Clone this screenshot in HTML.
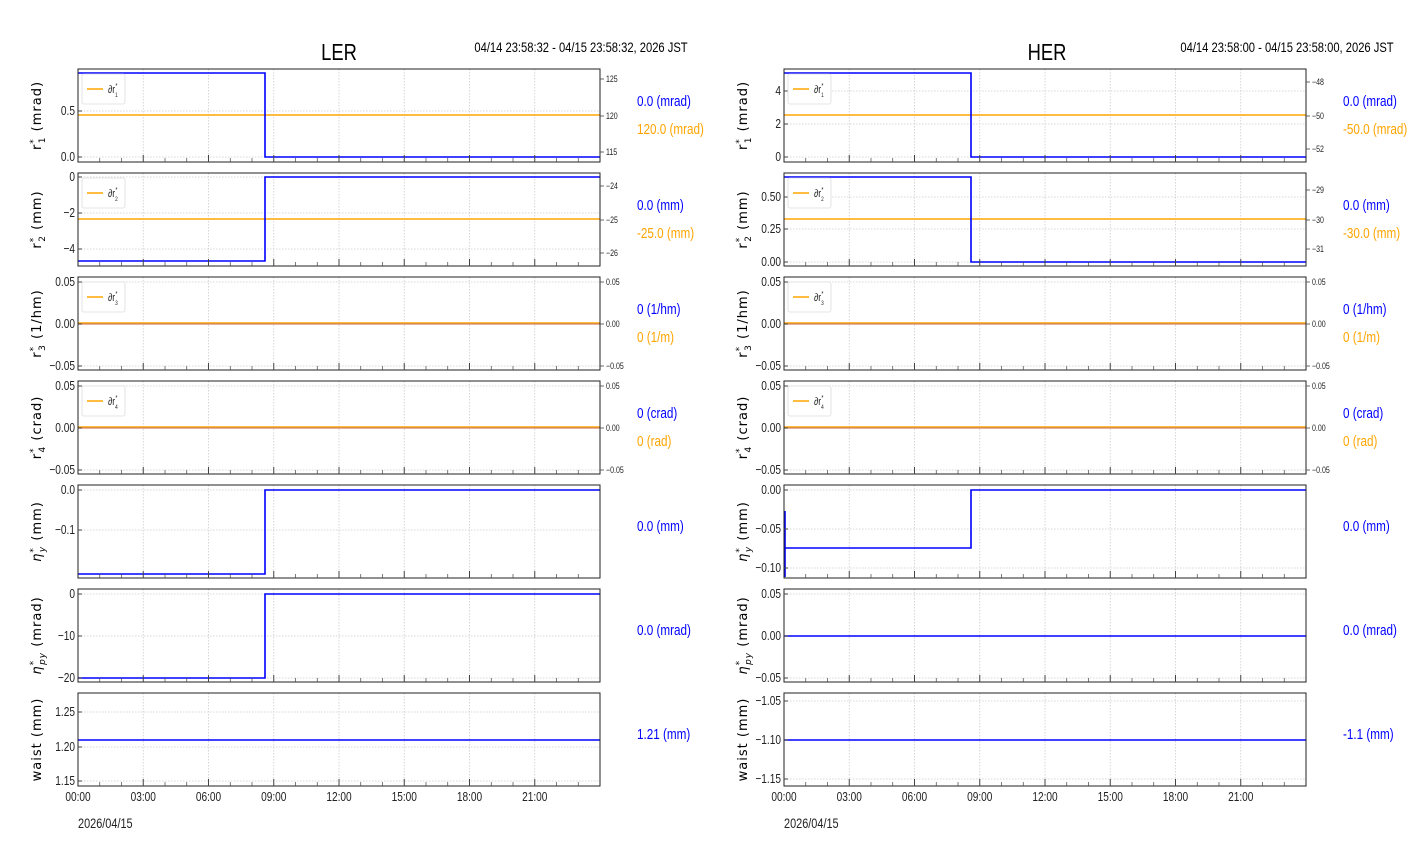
<!DOCTYPE html>
<html><head><meta charset="utf-8"><style>
html,body{margin:0;padding:0;background:#fff;width:1412px;height:864px;overflow:hidden}
svg text{font-family:"Liberation Sans",sans-serif}
.lab{font-family:"DejaVu Sans","Liberation Sans",sans-serif !important}
</style></head><body>
<svg id="s" width="1412" height="864" xmlns="http://www.w3.org/2000/svg"></svg>
<script>
var s=document.getElementById('s'),h='';
function L(x1,y1,x2,y2,c,w,extra){h+='<line x1="'+x1+'" y1="'+y1+'" x2="'+x2+'" y2="'+y2+'" stroke="'+c+'" stroke-width="'+w+'" '+(extra||'')+'/>';}
function T(x,y,t,sz,c,anc,sc){sc=sc||0.78;h+='<text x="0" y="0" transform="translate('+x+','+y+') scale('+sc+',1)" font-size="'+sz+'" fill="'+c+'" text-anchor="'+(anc||'start')+'">'+t+'</text>';}
T(339,60,'LER',23,'#000','middle',0.8);
T(581,52,'04/14 23:58:32 - 04/15 23:58:32, 2026 JST',14,'#000','middle',0.8);
T(1047,60,'HER',23,'#000','middle',0.8);
T(1287,52,'04/14 23:58:00 - 04/15 23:58:00, 2026 JST',14,'#000','middle',0.8);
var tops=[69,173,277,381,485,589,693],H=93;
function panel(x0,top,p,last){
 var x1=x0+522;
 for(var i=1;i<8;i++){var gx=x0+i*65.25;L(gx,top,gx,top+H,'#ccc',0.8,'stroke-dasharray="1.5,1.5"');}
 p.yt.forEach(function(t){L(x0,t[1],x1,t[1],'#ccc',0.8,'stroke-dasharray="1.5,1.5"');});
 if(p.o!=null) L(x0,p.o,x1,p.o,'#ffa500',1.5);
 if(p.r) L(x0,p.r,x1,p.r,'#d08060',1.2);
 if(p.b) h+='<polyline points="'+p.b+'" fill="none" stroke="#0000ff" stroke-width="1.6"/>';
 h+='<rect x="'+x0+'" y="'+top+'" width="522" height="'+H+'" fill="none" stroke="#222" stroke-width="1"/>';
 for(var i=1;i<24;i++){var tx=x0+i*21.75;var mj=i%3==0;L(tx,top+H,tx,top+H-(mj?7:4),'#444',mj?1:0.7);}
 p.yt.forEach(function(t){L(x0,t[1],x0+4,t[1],'#444',1);T(x0-3,t[1]+4,t[0],13,'#222','end');});
 if(p.rt){p.rt.forEach(function(t){L(x1,t[1],x1+4,t[1],'#444',0.8);T(x1+6,t[1]+3,t[0],9,'#222');});}
 var cy=top+H/2;
 h+='<text class="lab" x="0" y="0" font-size="13" fill="#000" text-anchor="middle" transform="translate('+(x0-37)+','+cy+') rotate(-90)" letter-spacing="1">'+p.yl+'</text>';
 if(p.lg){h+='<rect x="'+(x0+4)+'" y="'+(top+5)+'" width="43" height="30" rx="2" fill="#fff" stroke="#ddd" stroke-width="0.8"/>';L(x0+9,top+20,x0+25,top+20,'#ffa500',1.5);T(x0+30,top+24,'∂r<tspan font-size="6" dy="4">'+p.lg+'</tspan><tspan font-size="7" dx="-3" dy="-9">*</tspan>',11,'#222');}
 var vx=x1+37;
 if(p.o!=null||p.r){T(vx,top+37,p.v1,15,'#0000ff');T(vx,top+65,p.v2,15,'#ffa500');}
 else T(vx,top+46,p.v1,15,'#0000ff');
 if(last){var lb=['00:00','03:00','06:00','09:00','12:00','15:00','18:00','21:00'];
  lb.forEach(function(t,i){T(x0+i*65.25,top+H+15,t,13,'#222','middle');});
  T(x0,top+H+42,'2026/04/15',14,'#222');}
}
function step(x0,ya,yb,sx){return x0+','+ya+' '+sx+','+ya+' '+sx+','+yb+' '+(x0+522)+','+yb;}
var sup=function(a,b){return 'r<tspan font-size="9" dy="-5">*</tspan><tspan font-size="9" dx="-5" dy="9">'+a+'</tspan><tspan dy="-4"> '+b+'</tspan>';};
var eta=function(a,b){return '<tspan font-style="italic">η</tspan><tspan font-size="9" dy="-5">*</tspan><tspan font-size="9" font-style="italic" dx="-5" dy="9">'+a+'</tspan><tspan dy="-4"> '+b+'</tspan>';};
var XL=78,XR=784,sl=265,sr=971;
var Lp=[
{yt:[['0.5',111],['0.0',157]],rt:[['125',79],['120',116],['115',152]],o:115,b:step(XL,73,157,sl),yl:sup('1','(mrad)'),lg:'1',v1:'0.0 (mrad)',v2:'120.0 (mrad)'},
{yt:[['0',177],['−2',213],['−4',249]],rt:[['−24',186],['−25',220],['−26',253]],o:219,b:step(XL,261,177,sl),yl:sup('2','(mm)'),lg:'2',v1:'0.0 (mm)',v2:'-25.0 (mm)'},
{yt:[['0.05',282],['0.00',324],['−0.05',366]],rt:[['0.05',282],['0.00',324],['−0.05',366]],r:324,o:323,yl:sup('3','(1/hm)'),lg:'3',v1:'0 (1/hm)',v2:'0 (1/m)'},
{yt:[['0.05',386],['0.00',428],['−0.05',470]],rt:[['0.05',386],['0.00',428],['−0.05',470]],r:428,o:427,yl:sup('4','(crad)'),lg:'4',v1:'0 (crad)',v2:'0 (rad)'},
{yt:[['0.0',490],['−0.1',530]],b:step(XL,574,490,sl),yl:eta('y','(mm)'),v1:'0.0 (mm)'},
{yt:[['0',594],['−10',636],['−20',678]],b:step(XL,678,594,sl),yl:eta('py','(mrad)'),v1:'0.0 (mrad)'},
{yt:[['1.25',712],['1.20',747],['1.15',781]],b:XL+',740 '+(XL+522)+',740',yl:'waist (mm)',v1:'1.21 (mm)'}];
var Rp=[
{yt:[['4',91],['2',124],['0',157]],rt:[['−48',82],['−50',116],['−52',149]],o:115,b:step(XR,73,157,sr),yl:sup('1','(mrad)'),lg:'1',v1:'0.0 (mrad)',v2:'-50.0 (mrad)'},
{yt:[['0.50',197],['0.25',229],['0.00',262]],rt:[['−29',190],['−30',220],['−31',249]],o:219,b:step(XR,177,262,sr),yl:sup('2','(mm)'),lg:'2',v1:'0.0 (mm)',v2:'-30.0 (mm)'},
{yt:[['0.05',282],['0.00',324],['−0.05',366]],rt:[['0.05',282],['0.00',324],['−0.05',366]],r:324,o:323,yl:sup('3','(1/hm)'),lg:'3',v1:'0 (1/hm)',v2:'0 (1/m)'},
{yt:[['0.05',386],['0.00',428],['−0.05',470]],rt:[['0.05',386],['0.00',428],['−0.05',470]],r:428,o:427,yl:sup('4','(crad)'),lg:'4',v1:'0 (crad)',v2:'0 (rad)'},
{yt:[['0.00',490],['−0.05',529],['−0.10',568]],b:'785,511 785,577 785,548 '+sr+',548 '+sr+',490 '+(XR+522)+',490',yl:eta('y','(mm)'),v1:'0.0 (mm)'},
{yt:[['0.05',594],['0.00',636],['−0.05',678]],b:XR+',636 '+(XR+522)+',636',yl:eta('py','(mrad)'),v1:'0.0 (mrad)'},
{yt:[['−1.05',701],['−1.10',740],['−1.15',779]],b:XR+',740 '+(XR+522)+',740',yl:'waist (mm)',v1:'-1.1 (mm)'}];
Lp.forEach(function(p,i){panel(XL,tops[i],p,i==6);});
Rp.forEach(function(p,i){panel(XR,tops[i],p,i==6);});
s.insertAdjacentHTML('beforeend',h);
</script>
</body></html>
